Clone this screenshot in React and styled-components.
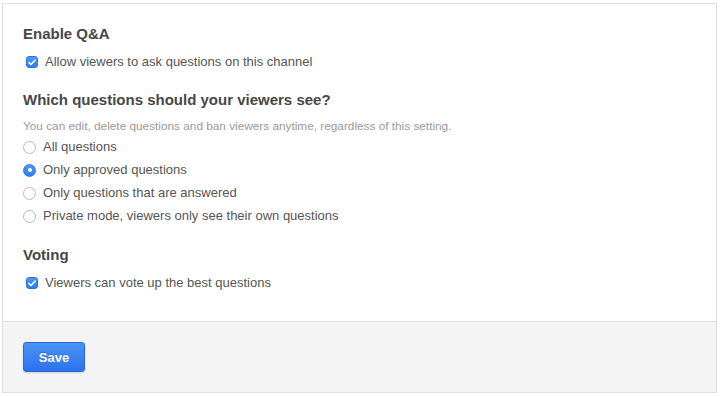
import React from "react";
import styled, { createGlobalStyle } from "styled-components";

const Global = createGlobalStyle`
  html, body { margin: 0; padding: 0; background: #fff; }
  body { font-family: "Liberation Sans", Arial, sans-serif; }
  * { box-sizing: border-box; }
`;

const Card = styled.div`
  margin: 3px 0 0 2px;
  width: 715px;
  height: 390px;
  border: 1px solid #dedede;
  display: flex;
  flex-direction: column;
  background: #fff;
`;

const Body = styled.div`
  flex: 1;
  padding: 21px 20px 0 20px;
  display: flex;
  flex-direction: column;
`;

const Section = styled.section`
  display: flex;
  flex-direction: column;
  margin-top: ${(p) => p.$gap || 0}px;
`;

const Heading = styled.h3`
  margin: 0 0 ${(p) => p.$mb ?? 10}px 0;
  font-size: 15px;
  line-height: 18px;
  font-weight: bold;
  color: #474747;
`;

const Hint = styled.p`
  margin: 0 0 5px 0;
  font-size: 11.8px;
  line-height: 14px;
  color: #9a9a9a;
`;

const Options = styled.div`
  display: flex;
  flex-direction: column;
  gap: 5px;
`;

const Row = styled.label`
  display: flex;
  align-items: center;
  height: 18px;
  font-size: 13px;
  line-height: 18px;
  color: #555;
  padding-left: ${(p) => p.$indent || 0}px;
  gap: ${(p) => p.$gap || 8}px;
`;

const CheckBox = styled.span`
  width: 12px;
  height: 12px;
  border-radius: 3px;
  background: linear-gradient(#4d98f7, #2f7cf0);
  border: 1px solid #2f73e0;
  display: inline-flex;
  align-items: center;
  justify-content: center;
  flex: none;
`;

const Radio = styled.span`
  width: 13px;
  height: 13px;
  border-radius: 50%;
  flex: none;
  display: inline-flex;
  align-items: center;
  justify-content: center;
  border: 1px solid ${(p) => (p.$on ? "#2f7cf0" : "#b9b9b9")};
  background: ${(p) => (p.$on ? "linear-gradient(#4d98f7, #2f7cf0)" : "#fff")};
  &::after {
    content: "";
    display: ${(p) => (p.$on ? "block" : "none")};
    width: 4px;
    height: 4px;
    border-radius: 50%;
    background: #fff;
  }
`;

const Footer = styled.div`
  height: 71px;
  border-top: 1px solid #dedede;
  background: #f4f4f4;
  padding: 20px 20px 0 20px;
`;

const SaveButton = styled.button`
  width: 62px;
  height: 30px;
  border-radius: 3px;
  border: 1px solid #2a6ad8;
  background: linear-gradient(#4c93f6, #2c72ee);
  color: #fff;
  font-family: "Liberation Sans", Arial, sans-serif;
  font-weight: bold;
  font-size: 13px;
  text-shadow: 0 -1px 0 rgba(0, 0, 0, 0.2);
  box-shadow: 0 1px 2px rgba(0, 0, 0, 0.15);
  padding: 0;
  cursor: pointer;
`;

const Check = () => (
  <CheckBox>
    <svg width="8" height="7" viewBox="0 0 8 7">
      <path d="M1 3.6 L3 5.5 L7 1.2" fill="none" stroke="#fff" strokeWidth="1.6" strokeLinecap="round" strokeLinejoin="round" />
    </svg>
  </CheckBox>
);

const radios = [
  { label: "All questions", on: false },
  { label: "Only approved questions", on: true },
  { label: "Only questions that are answered", on: false },
  { label: "Private mode, viewers only see their own questions", on: false },
];

export default function App() {
  return (
    <>
      <Global />
      <Card>
        <Body>
          <Section>
            <Heading>Enable Q&amp;A</Heading>
            <Row $indent={3} $gap={7}>
              <Check />
              Allow viewers to ask questions on this channel
            </Row>
          </Section>
          <Section $gap={20}>
            <Heading>Which questions should your viewers see?</Heading>
            <Hint>You can edit, delete questions and ban viewers anytime, regardless of this setting.</Hint>
            <Options>
              {radios.map((r) => (
                <Row key={r.label} $gap={7}>
                  <Radio $on={r.on} />
                  {r.label}
                </Row>
              ))}
            </Options>
          </Section>
          <Section $gap={21}>
            <Heading>Voting</Heading>
            <Row $indent={3} $gap={7}>
              <Check />
              Viewers can vote up the best questions
            </Row>
          </Section>
        </Body>
        <Footer>
          <SaveButton>Save</SaveButton>
        </Footer>
      </Card>
    </>
  );
}
